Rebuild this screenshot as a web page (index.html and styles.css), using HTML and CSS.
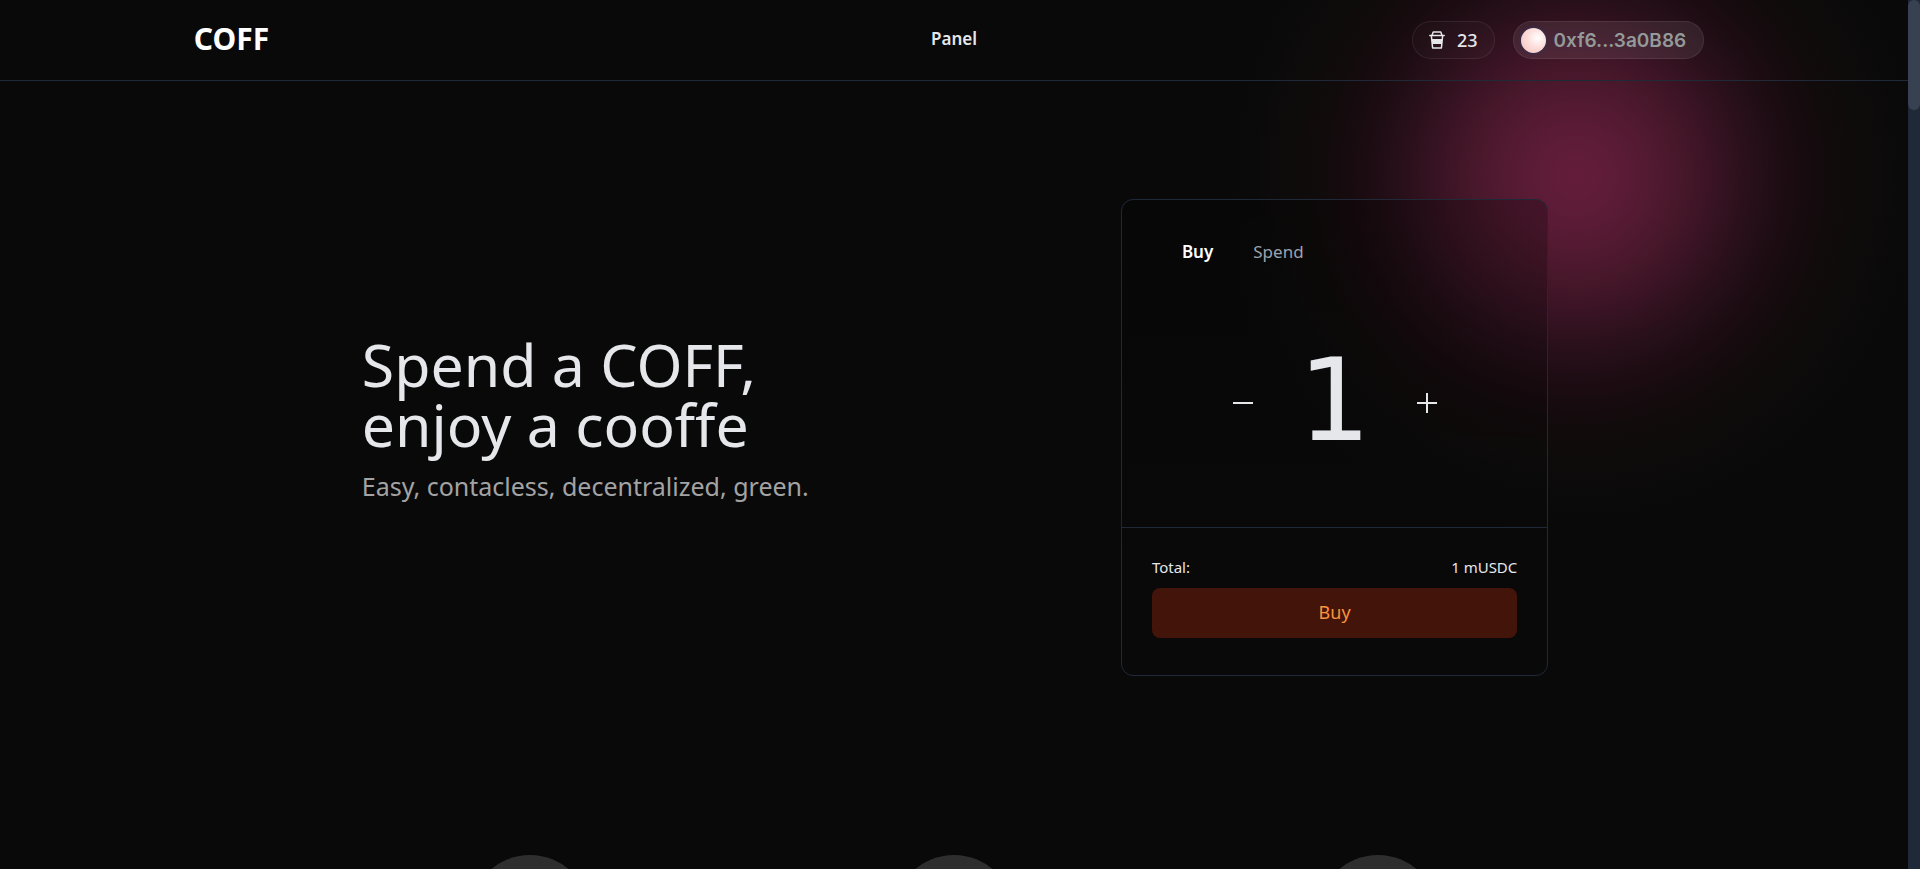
FILE: index.html
```html
<!DOCTYPE html>
<html lang="en">
<head>
<meta charset="utf-8">
<meta name="viewport" content="width=device-width, initial-scale=1">
<title>COFF</title>
<link rel="stylesheet" href="styles.css">
</head>
<body>
<div class="glow" aria-hidden="true"></div>
<div class="scrollbar" aria-hidden="true"><div class="scrollbar-thumb"></div></div>
<header class="topbar">
  <div class="topbar-inner">
    <a class="logo" href="#">COFF</a>
    <nav><a class="nav-link" href="#">Panel</a></nav>
    <div class="account">
      <button class="pill balance" type="button">
        <svg class="cup" viewBox="0 0 16 18" aria-hidden="true">
          <path d="M3 4.2 4.2 1h7.6L13 4.2M.8 4.6h14.4M2.4 5l1.2 12h8.8l1.2-12" fill="none" stroke="currentColor" stroke-width="1.5" stroke-linejoin="round" stroke-linecap="round"/>
          <path d="M2.6 8h10.8l-.6 5H3.2z" fill="currentColor"/>
        </svg>
        <span>23</span>
      </button>
      <button class="pill wallet" type="button">
        <span class="avatar"></span>
        <span>0xf6...3a0B86</span>
      </button>
    </div>
  </div>
</header>
<main>
  <section class="hero">
    <div class="intro">
      <h1>Spend a COFF,<br>enjoy a cooffe</h1>
      <p>Easy, contacless, decentralized, green.</p>
    </div>
    <div class="card">
      <div class="tabs" role="tablist">
        <button class="tab active" type="button" role="tab" aria-selected="true">Buy</button>
        <button class="tab" type="button" role="tab" aria-selected="false">Spend</button>
      </div>
      <div class="counter">
        <button class="step" type="button" aria-label="Decrease">
          <svg viewBox="0 0 20 20" aria-hidden="true"><path d="M0 10h20"/></svg>
        </button>
        <output class="amount">1</output>
        <button class="step" type="button" aria-label="Increase">
          <svg viewBox="0 0 20 20" aria-hidden="true"><path d="M0 10h20M10 0v20"/></svg>
        </button>
      </div>
      <div class="checkout">
        <div class="total"><span>Total:</span><span>1 mUSDC</span></div>
        <button class="buy" type="button">Buy</button>
      </div>
    </div>
  </section>
  <section class="features" aria-hidden="true">
    <div class="feature"></div>
    <div class="feature"></div>
    <div class="feature"></div>
  </section>
</main>
</body>
</html>
```

FILE: styles.css
```css
* { box-sizing: border-box; }

html { background: #090909; height: 100%; overflow: hidden; }

body {
  margin: 0;
  height: 100%;
  padding-right: 12px;
  overflow: hidden;
  position: relative;
  isolation: isolate;
  background: #090909;
  color: #e5e7eb;
  font-family: "Noto Sans", "DejaVu Sans", sans-serif;
  font-size: 18px;
}

button {
  font: inherit;
  color: inherit;
  background: none;
  border: 0;
  padding: 0;
  cursor: pointer;
}

a { color: inherit; text-decoration: none; }

.glow {
  position: absolute;
  z-index: -1;
  top: -184px;
  right: -16px;
  width: 720px;
  height: 720px;
  background: radial-gradient(circle closest-side,
    #631d3a 0, #5f1c38 30px, #541a32 70px, #47172a 105px,
    #381323 140px, #2a101b 170px, #1f0d14 200px, #170b0f 228px,
    #110b0c 255px, #0e0b0b 285px, #0b0a0a 320px, #090909 360px);
}

.scrollbar {
  position: fixed;
  inset: 0 0 0 auto;
  width: 12px;
  background: #1f2937;
}

.scrollbar-thumb { height: 110px; border-radius: 6px; background: #374151; }

.topbar { border-bottom: 1px solid #1f2937; }

.topbar-inner {
  display: grid;
  grid-template-columns: 1fr auto 1fr;
  align-items: center;
  height: 80px;
  padding: 0 10%;
}

.logo { padding: 0 0 2px 3px; color: #fff; font-size: 30px; font-weight: 700; line-height: 36px; }

.nav-link { display: block; padding-bottom: 3px; font-size: 17px; font-weight: 600; }

.account { display: flex; justify-content: flex-end; gap: 18px; padding-right: 13px; }

.pill {
  display: flex;
  align-items: center;
  height: 38px;
  border: 1px solid rgba(255, 255, 255, .08);
  border-radius: 19px;
  background: rgba(255, 255, 255, .02);
}

.balance { gap: 12px; padding: 0 16px; font-size: 18px; font-weight: 500; }

.cup { width: 16px; height: 18px; }

.wallet {
  gap: 8px;
  padding: 0 17px 0 7px;
  background: rgba(255, 255, 255, .08);
  color: #939a99;
  font-family: Inter, Roboto, sans-serif;
  font-size: 19px;
  font-weight: 600;
}

.avatar {
  width: 25px;
  height: 25px;
  border-radius: 50%;
  background: radial-gradient(circle at 66% 40%, #fff 0, #fbdcd9 45%, #f6c1bd 100%);
  box-shadow: 0 0 0 2px rgba(48, 48, 84, .5);
}

.hero {
  display: grid;
  grid-template-columns: 1fr 1fr;
  align-items: center;
  padding: 118px 10%;
}

.intro { padding: 0 0 40px 171px; }

h1 { margin: 0; font-size: 59px; font-weight: 400; line-height: 60px; }

.intro p { margin: 16px 0 0; color: #a3a3a3; font-size: 25px; line-height: 32px; }

.card {
  justify-self: center;
  width: 56%;
  min-width: 360px;
  margin-right: 2px;
  border: 1px solid #1f2937;
  border-radius: 12px;
  background: linear-gradient(rgba(0, 0, 0, .25), rgba(12, 12, 12, .2));
}

.tabs { display: flex; gap: 40px; padding: 40px 60px 0; line-height: 24px; }

.tab { color: #9ca3af; font-size: 17px; }

.tab.active { color: #fff; font-weight: 600; }

.counter {
  display: flex;
  align-items: center;
  justify-content: center;
  gap: 42px;
  height: 263px;
  padding-top: 14px;
}

.step { width: 20px; height: 20px; }

.step svg { display: block; fill: none; stroke: #e5e7eb; stroke-width: 2; }

.amount {
  width: 80px;
  padding-bottom: 4px;
  text-align: center;
  font-family: "DejaVu Sans", sans-serif;
  font-size: 114px;
  line-height: 120px;
}

.checkout { padding: 30px 30px 37px; border-top: 1px solid #1f2937; }

.total { display: flex; justify-content: space-between; margin-bottom: 12px; font-size: 15px; line-height: 18px; }

.buy {
  width: 100%;
  height: 50px;
  padding-bottom: 3px;
  border-radius: 8px;
  background: #431409;
  color: #fb923c;
}

.features {
  display: grid;
  grid-template-columns: repeat(3, 1fr);
  justify-items: center;
  padding: 61px 16.6667% 0;
}

.feature { width: 120px; height: 120px; border-radius: 50%; background: #2e2e2e; }
```
